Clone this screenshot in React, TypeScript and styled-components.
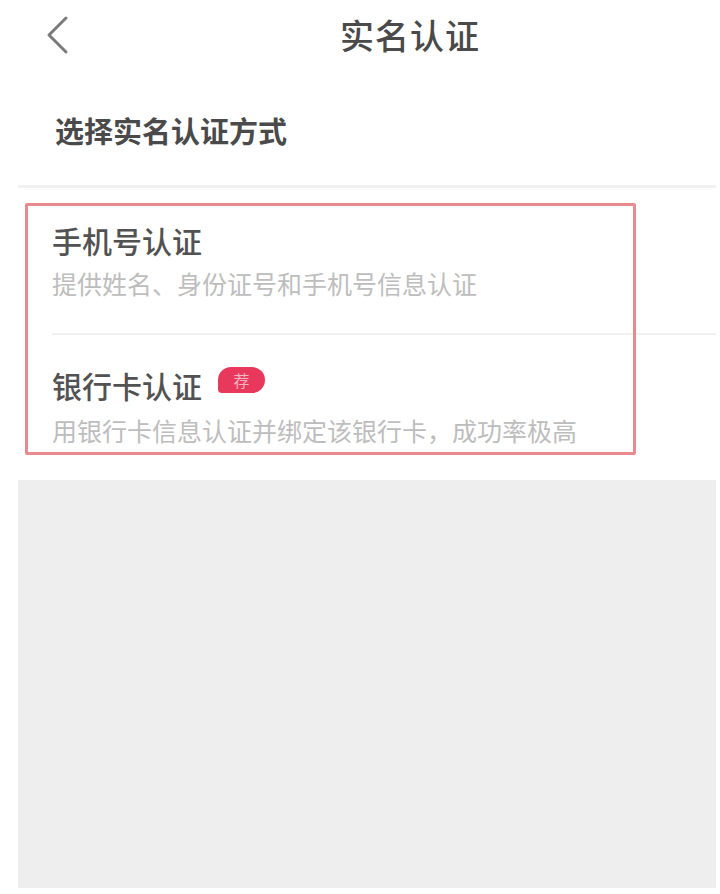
import React from "react";
import styled, { createGlobalStyle } from "styled-components";

const Global = createGlobalStyle`
  html, body { margin: 0; padding: 0; background: #ffffff; }
  body { font-family: "Noto Sans CJK SC", "Noto Sans", sans-serif; }
  * { box-sizing: border-box; }
`;

const Page = styled.div`
  width: 720px;
  height: 894px;
  display: flex;
  flex-direction: column;
  background: #ffffff;
`;

const Header = styled.div`
  height: 70px;
  display: flex;
  align-items: center;
  padding-left: 45px;
`;

const BackButton = styled.div`
  width: 24px;
  height: 40px;
  display: flex;
  align-items: center;
  justify-content: center;
`;

const Title = styled.div`
  margin-left: 271px;
  font-size: 34px;
  line-height: 40px;
  font-weight: 500;
  color: #4a4a4a;
  letter-spacing: 1px;
`;

const SectionTitle = styled.div`
  height: 115px;
  padding: 42px 0 0 55px;
  font-size: 29px;
  line-height: 36px;
  font-weight: 700;
  color: #4a4a4a;
`;

const Divider = styled.div<{ $left: number; $h: number }>`
  height: ${(p) => p.$h}px;
  margin-left: ${(p) => p.$left}px;
  margin-right: 4px;
  background: #f1f1f1;
`;

const List = styled.div`
  position: relative;
  display: flex;
  flex-direction: column;
`;

const Row = styled.div<{ $top: number; $gap: number }>`
  display: flex;
  flex-direction: column;
  padding: ${(p) => p.$top}px 0 33px 52px;
  gap: ${(p) => p.$gap}px;
`;

const RowTitle = styled.div`
  display: flex;
  align-items: center;
  gap: 16px;
  font-size: 30px;
  line-height: 40px;
  font-weight: 500;
  color: #525252;
`;

const RowDesc = styled.div`
  font-size: 25px;
  line-height: 34px;
  color: #bdbdbd;
`;

const Badge = styled.span`
  display: inline-flex;
  align-items: center;
  justify-content: center;
  width: 47px;
  height: 26px;
  margin-top: -10px;
  border-radius: 13px 13px 13px 4px;
  background: #e8385c;
  color: #f7b5c2;
  font-size: 16px;
  font-weight: 400;
  line-height: 26px;
`;

const Highlight = styled.div`
  position: absolute;
  left: 25px;
  top: 15px;
  width: 611px;
  height: 252px;
  border: 3px solid #e98a91;
  border-radius: 2px;
  pointer-events: none;
`;

const Filler = styled.div`
  flex: 1;
  margin: 0 4px 6px 18px;
  background: #eeeeee;
`;

export default function App() {
  return (
    <>
      <Global />
      <Page>
        <Header>
          <BackButton>
            <svg width="24" height="40" viewBox="0 0 24 40">
              <path d="M21 3 L4 20 L21 37" fill="none" stroke="#7a7a7a" strokeWidth="3" strokeLinecap="round" strokeLinejoin="round" />
            </svg>
          </BackButton>
          <Title>实名认证</Title>
        </Header>
        <SectionTitle>选择实名认证方式</SectionTitle>
        <Divider $left={18} $h={3} />
        <List>
          <Row $top={32} $gap={6}>
            <RowTitle>手机号认证</RowTitle>
            <RowDesc>提供姓名、身份证号和手机号信息认证</RowDesc>
          </Row>
          <Divider $left={52} $h={2} />
          <Row $top={30} $gap={8}>
            <RowTitle>
              银行卡认证
              <Badge>荐</Badge>
            </RowTitle>
            <RowDesc>用银行卡信息认证并绑定该银行卡，成功率极高</RowDesc>
          </Row>
          <Highlight />
        </List>
        <Filler />
      </Page>
    </>
  );
}
